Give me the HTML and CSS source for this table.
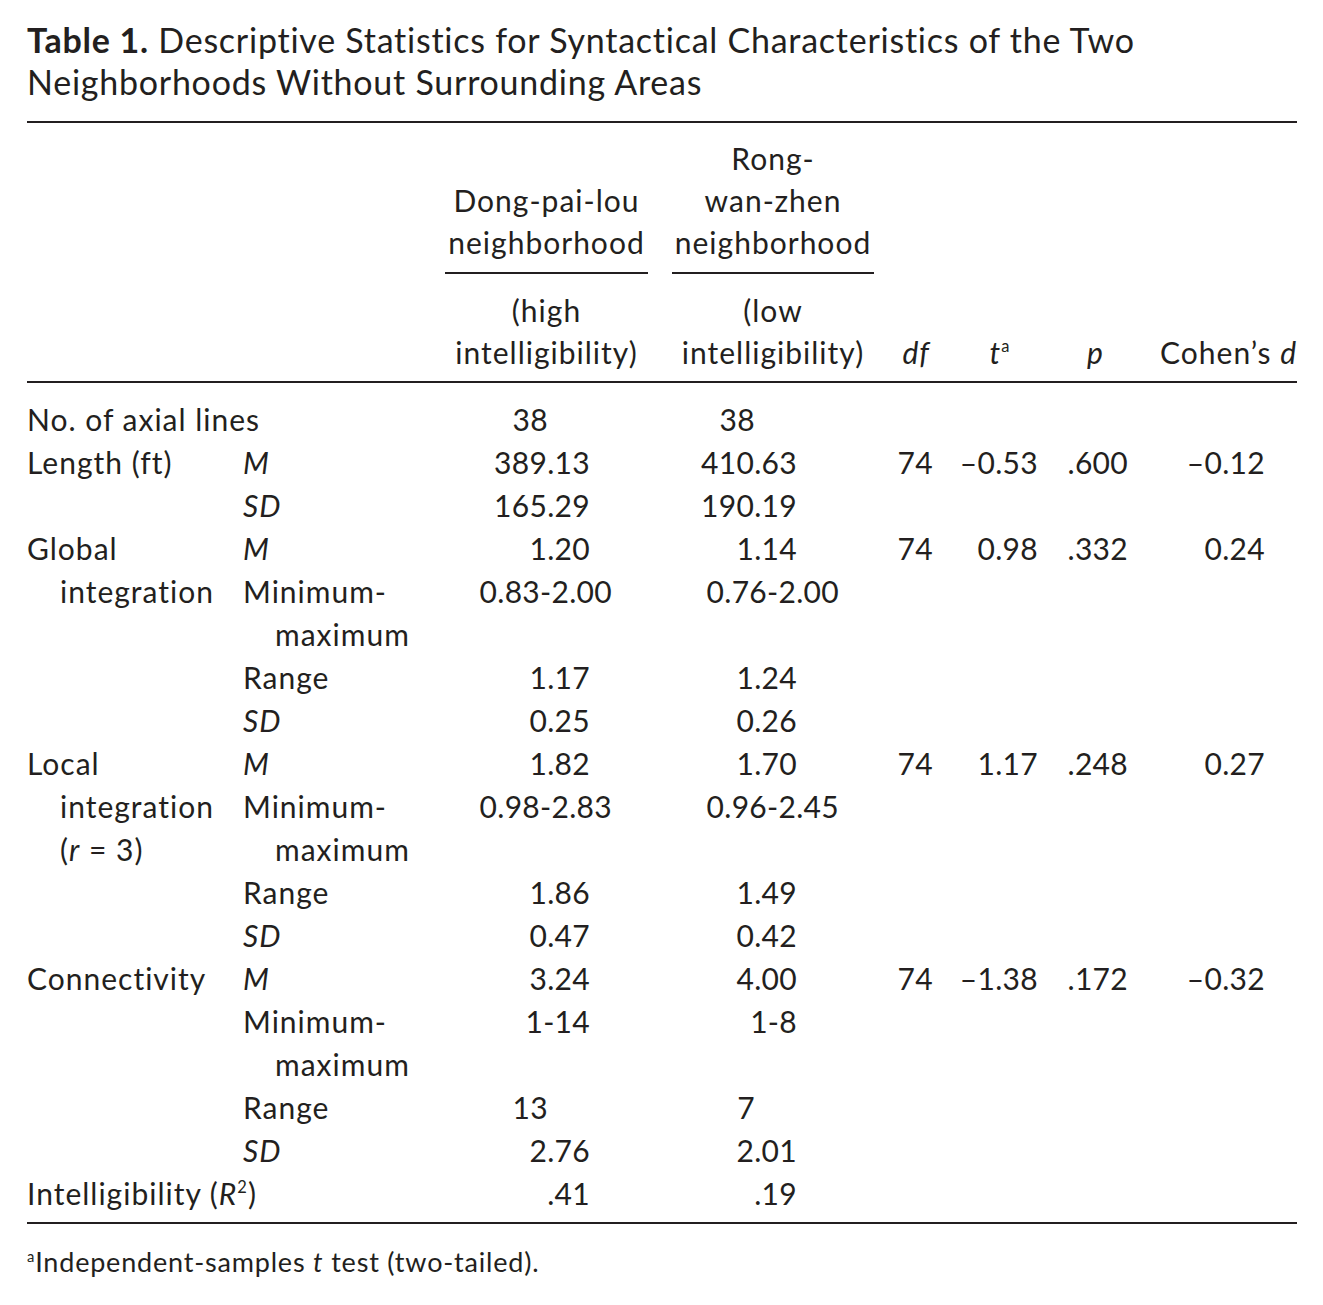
FILE: index.html
```html
<!DOCTYPE html>
<html lang="en">
<head>
<meta charset="utf-8">
<title>Table 1</title>
<link rel="stylesheet" href="styles.css">
</head>
<body>
<div class="page">
  <p class="caption"><b>Table 1.</b> <span>Descriptive Statistics for Syntactical Characteristics of the Two</span><br><span>Neighborhoods Without Surrounding Areas</span></p>
  <table class="stats">
    <colgroup>
      <col class="w-label"><col class="w-stat"><col class="w-dong"><col class="w-rong"><col class="w-df"><col class="w-t"><col class="w-p"><col class="w-d">
    </colgroup>
    <thead>
      <tr class="h-top">
        <th></th><th></th>
        <th class="grp grp-dong"><div class="grp-in">Dong-pai-lou<br>neighborhood</div></th>
        <th class="grp grp-rong"><div class="grp-in">Rong-<br>wan-zhen<br>neighborhood</div></th>
        <th></th><th></th><th></th><th></th>
      </tr>
      <tr class="h-sub">
        <th></th><th></th>
        <th class="sub-dong">(high<br>intelligibility)</th>
        <th class="sub-rong">(low<br>intelligibility)</th>
        <th class="hd-df"><i>df</i></th>
        <th class="hd-t"><i>t</i><sup>a</sup></th>
        <th class="hd-p"><i>p</i></th>
        <th class="hd-d">Cohen’s <i>d</i></th>
      </tr>
    </thead>
    <tbody>
      <tr class="first">
        <td class="lab" colspan="2">No. of axial lines</td>
        <td class="v3 short">38</td><td class="v4 short">38</td>
        <td></td><td></td><td></td><td></td>
      </tr>
      <tr>
        <td class="lab">Length (ft)</td><td class="st"><i>M</i></td>
        <td class="v3">389.13</td><td class="v4">410.63</td>
        <td class="vdf">74</td><td class="vt">–0.53</td><td class="vp">.600</td><td class="vd">–0.12</td>
      </tr>
      <tr>
        <td class="lab"></td><td class="st"><i>SD</i></td>
        <td class="v3">165.29</td><td class="v4">190.19</td>
        <td></td><td></td><td></td><td></td>
      </tr>
      <tr>
        <td class="lab">Global</td><td class="st"><i>M</i></td>
        <td class="v3">1.20</td><td class="v4">1.14</td>
        <td class="vdf">74</td><td class="vt">0.98</td><td class="vp">.332</td><td class="vd">0.24</td>
      </tr>
      <tr>
        <td class="lab ind">integration</td><td class="st hang">Minimum-<br>maximum</td>
        <td class="v3 wide">0.83-2.00</td><td class="v4 wide">0.76-2.00</td>
        <td></td><td></td><td></td><td></td>
      </tr>
      <tr>
        <td class="lab"></td><td class="st">Range</td>
        <td class="v3">1.17</td><td class="v4">1.24</td>
        <td></td><td></td><td></td><td></td>
      </tr>
      <tr>
        <td class="lab"></td><td class="st"><i>SD</i></td>
        <td class="v3">0.25</td><td class="v4">0.26</td>
        <td></td><td></td><td></td><td></td>
      </tr>
      <tr>
        <td class="lab">Local</td><td class="st"><i>M</i></td>
        <td class="v3">1.82</td><td class="v4">1.70</td>
        <td class="vdf">74</td><td class="vt">1.17</td><td class="vp">.248</td><td class="vd">0.27</td>
      </tr>
      <tr>
        <td class="lab ind">integration<br>(<i>r</i> = 3)</td><td class="st hang">Minimum-<br>maximum</td>
        <td class="v3 wide">0.98-2.83</td><td class="v4 wide">0.96-2.45</td>
        <td></td><td></td><td></td><td></td>
      </tr>
      <tr>
        <td class="lab"></td><td class="st">Range</td>
        <td class="v3">1.86</td><td class="v4">1.49</td>
        <td></td><td></td><td></td><td></td>
      </tr>
      <tr>
        <td class="lab"></td><td class="st"><i>SD</i></td>
        <td class="v3">0.47</td><td class="v4">0.42</td>
        <td></td><td></td><td></td><td></td>
      </tr>
      <tr>
        <td class="lab">Connectivity</td><td class="st"><i>M</i></td>
        <td class="v3">3.24</td><td class="v4">4.00</td>
        <td class="vdf">74</td><td class="vt">–1.38</td><td class="vp">.172</td><td class="vd">–0.32</td>
      </tr>
      <tr>
        <td class="lab"></td><td class="st hang">Minimum-<br>maximum</td>
        <td class="v3">1-14</td><td class="v4">1-8</td>
        <td></td><td></td><td></td><td></td>
      </tr>
      <tr>
        <td class="lab"></td><td class="st">Range</td>
        <td class="v3 short">13</td><td class="v4 short">7</td>
        <td></td><td></td><td></td><td></td>
      </tr>
      <tr>
        <td class="lab"></td><td class="st"><i>SD</i></td>
        <td class="v3">2.76</td><td class="v4">2.01</td>
        <td></td><td></td><td></td><td></td>
      </tr>
      <tr class="last">
        <td class="lab" colspan="2">Intelligibility (<i>R</i><sup>2</sup>)</td>
        <td class="v3">.41</td><td class="v4">.19</td>
        <td></td><td></td><td></td><td></td>
      </tr>
    </tbody>
  </table>
  <p class="note"><sup>a</sup>Independent-samples <i>t</i> test (two-tailed).</p>
</div>
</body>
</html>
```

FILE: styles.css
```css
html, body {
  margin: 0;
  background: #ffffff;
}

body {
  color: #231f20;
  font-family: Lato, "Open Sans", "Liberation Sans", sans-serif;
}

.page {
  width: 1270px;
  padding: 19px 26px 0 27px;
}

.caption {
  margin: 0 0 18px 0;
  font-size: 34px;
  letter-spacing: 0.75px;
  line-height: 42px;
  width: 1200px;
}

.caption b {
  font-weight: 700;
}

.stats {
  width: 1270px;
  table-layout: fixed;
  border-collapse: collapse;
  font-size: 30px;
  letter-spacing: 1px;
}

.w-label { width: 214px; }
.w-stat { width: 204px; }
.w-dong { width: 215px; }
.w-rong { width: 220px; }
.w-df { width: 65px; }
.w-t { width: 100px; }
.w-p { width: 95px; }
.w-d { width: 157px; }

.stats th {
  font-weight: 400;
  vertical-align: bottom;
  padding: 0;
  line-height: 42px;
}

.h-top th {
  border-top: 2px solid #231f20;
  padding-top: 14px;
  padding-bottom: 9px;
}

.h-sub th {
  border-bottom: 2px solid #231f20;
  padding-top: 6px;
  padding-bottom: 8px;
}

.grp-in {
  text-align: center;
  padding-bottom: 9px;
  border-bottom: 2px solid #231f20;
}

.grp-dong .grp-in {
  margin-right: 12px;
}

.grp-rong .grp-in {
  margin-left: 12px;
  margin-right: 6px;
}

.sub-dong {
  text-align: center;
  padding-right: 12px !important;
}

.sub-rong {
  text-align: center;
  padding-left: 12px !important;
  padding-right: 6px !important;
}

.hd-df {
  text-align: right;
  padding-right: 15px !important;
}

.hd-t {
  text-align: center;
  padding-left: 10px !important;
}

.hd-p {
  text-align: center;
  padding-left: 6px !important;
}

.hd-d {
  text-align: right;
}

.stats sup {
  font-size: 0.55em;
  line-height: 0;
  vertical-align: 0.75em;
}

.stats td {
  padding: 0;
  vertical-align: top;
  line-height: 43px;
  white-space: nowrap;
}

.stats tbody tr.first td {
  padding-top: 15px;
}

.stats tbody tr.last td {
  padding-bottom: 7px;
  border-bottom: 2px solid #231f20;
}

.lab {
  text-align: left;
}

.ind {
  padding-left: 33px !important;
}

.st {
  padding-left: 2px !important;
}

.hang {
  padding-left: 34px !important;
  text-indent: -32px;
}

.v3, .v4, .vdf, .vt, .vp, .vd {
  letter-spacing: 0.3px;
  text-align: right;
}

.v3 {
  padding-right: 70px !important;
}

.v3.short {
  padding-right: 112px !important;
}

.v3.wide {
  padding-right: 48px !important;
}

.v4 {
  padding-right: 83px !important;
}

.v4.short {
  padding-right: 125px !important;
}

.v4.wide {
  padding-right: 41px !important;
}

.vdf {
  padding-right: 12px !important;
}

.vt {
  padding-right: 7px !important;
}

.vp {
  padding-right: 12px !important;
}

.vd {
  padding-right: 32px !important;
}

.note {
  margin: 20px 0 0 0;
  font-size: 27px;
  letter-spacing: 0.8px;
  line-height: 36px;
}

.note sup {
  font-size: 0.55em;
  line-height: 0;
  vertical-align: 0.7em;
}
```
